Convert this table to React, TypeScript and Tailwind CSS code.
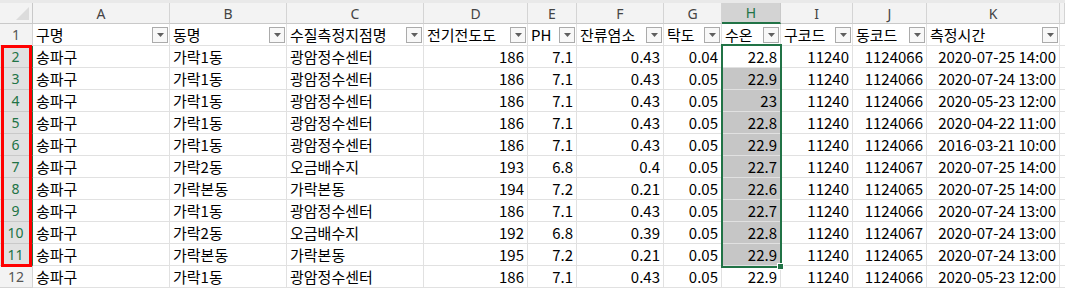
import React from "react";

const headers = ["구명", "동명", "수질측정지점명", "전기전도도", "PH", "잔류염소", "탁도", "수온", "구코드", "동코드", "측정시간"];
const letters = ["A", "B", "C", "D", "E", "F", "G", "H", "I", "J", "K", ""];

const rows: string[][] = [
  ["송파구", "가락1동", "광암정수센터", "186", "7.1", "0.43", "0.04", "22.8", "11240", "1124066", "2020-07-25 14:00"],
  ["송파구", "가락1동", "광암정수센터", "186", "7.1", "0.43", "0.05", "22.9", "11240", "1124066", "2020-07-24 13:00"],
  ["송파구", "가락1동", "광암정수센터", "186", "7.1", "0.43", "0.05", "23", "11240", "1124066", "2020-05-23 12:00"],
  ["송파구", "가락1동", "광암정수센터", "186", "7.1", "0.43", "0.05", "22.8", "11240", "1124066", "2020-04-22 11:00"],
  ["송파구", "가락1동", "광암정수센터", "186", "7.1", "0.43", "0.05", "22.9", "11240", "1124066", "2016-03-21 10:00"],
  ["송파구", "가락2동", "오금배수지", "193", "6.8", "0.4", "0.05", "22.7", "11240", "1124067", "2020-07-25 14:00"],
  ["송파구", "가락본동", "가락본동", "194", "7.2", "0.21", "0.05", "22.6", "11240", "1124065", "2020-07-25 14:00"],
  ["송파구", "가락1동", "광암정수센터", "186", "7.1", "0.43", "0.05", "22.7", "11240", "1124066", "2020-07-24 13:00"],
  ["송파구", "가락2동", "오금배수지", "192", "6.8", "0.39", "0.05", "22.8", "11240", "1124067", "2020-07-24 13:00"],
  ["송파구", "가락본동", "가락본동", "195", "7.2", "0.21", "0.05", "22.9", "11240", "1124065", "2020-07-24 13:00"],
  ["송파구", "가락1동", "광암정수센터", "186", "7.1", "0.43", "0.05", "22.9", "11240", "1124066", "2020-05-23 12:00"],
];

const FilterButton = () => (
  <span className="ml-auto mr-px flex h-4 w-4 shrink-0 items-center justify-center border border-[#ababab] bg-[#f8f8f8]">
    <svg width="7" height="4" viewBox="0 0 7 4">
      <path d="M0 0h7L3.5 4z" fill="#5f5f5f" />
    </svg>
  </span>
);

export default function App() {
  return (
    <div className="h-[291px] w-[1065px] overflow-hidden bg-white font-['Noto_Sans_CJK_KR',sans-serif] text-[15px] text-black">
      <div className="h-[3px] bg-[#e9e9e9]" />
      <div className="relative grid grid-cols-[33px_137px_117px_137px_104px_49px_87px_58px_59px_72px_74px_133px_1fr] grid-rows-[21px_repeat(12,22px)_1fr]">
        {/* corner */}
        <div className="relative border-r border-b border-[#c9c9c9] bg-[#f3f3f3]">
          <svg className="absolute right-[3px] bottom-[3px]" width="13" height="13" viewBox="0 0 13 13">
            <path d="M13 0v13H0z" fill="#dcdcdc" />
          </svg>
        </div>

        {/* column letters */}
        {letters.map((l, i) => (
          <div
            key={"c" + i}
            className={
              l === "H"
                ? "flex items-center justify-center border-r border-b-2 border-r-[#c9c9c9] border-b-[#217346] bg-[#d3d3d3] font-['Noto_Sans',sans-serif] text-[14px] text-[#217346]"
                : "flex items-center justify-center border-r border-b border-[#d4d4d4] border-b-[#c9c9c9] bg-[#f3f3f3] font-['Noto_Sans',sans-serif] text-[14px] text-[#444]"
            }
          >
            {l}
          </div>
        ))}

        {/* row 1 headers */}
        <div className="flex items-center justify-center border-r border-b border-[#d4d4d4] bg-[#f3f3f3] font-['Noto_Sans',sans-serif] text-[14px] text-[#555]">
          1
        </div>
        {headers.map((h, i) => (
          <div key={"h" + i} className="flex items-center overflow-hidden border-r border-b border-[#e1e1e1] pl-[3px] leading-none">
            <span className="whitespace-nowrap">{h}</span>
            <FilterButton />
          </div>
        ))}
        <div className="border-b border-[#e1e1e1]" />

        {/* data rows */}
        {rows.map((r, ri) => {
          const selected = ri < 10;
          return (
            <React.Fragment key={"r" + ri}>
              <div
                className={
                  selected
                    ? "flex items-center justify-center border-r-2 border-b border-r-[#217346] border-b-[#c9c9c9] bg-[#e1e1e1] font-['Noto_Sans',sans-serif] text-[14px] text-[#217346]"
                    : "flex items-center justify-center border-r border-b border-[#d4d4d4] bg-[#f3f3f3] font-['Noto_Sans',sans-serif] text-[14px] text-[#555]"
                }
              >
                {ri + 2}
              </div>
              {r.map((v, ci) => (
                <div
                  key={ci}
                  className={[
                    "flex items-center overflow-hidden whitespace-nowrap border-r border-b border-[#e1e1e1] leading-none",
                    ci < 3 ? "pl-[3px]" : "justify-end pr-[3px]",
                    ci === 7 && ri > 0 && ri < 10 ? "bg-[#c6c6c6]" : "",
                  ].join(" ")}
                >
                  {v}
                </div>
              ))}
              <div className="border-b border-[#e1e1e1]" />
            </React.Fragment>
          );
        })}

        {/* selection H2:H11 */}
        <div className="pointer-events-none absolute top-[41px] left-[721px] h-[224px] w-[61px] border-2 border-[#217346]" />
        <div className="pointer-events-none absolute top-[260px] left-[777px] h-[7px] w-[7px] border border-white bg-[#217346]" />

        {/* red highlight on row headers */}
        <div className="pointer-events-none absolute top-[42px] left-[1px] h-[222px] w-[31px] border-[3px] border-[#ff0000]" />
      </div>
    </div>
  );
}
